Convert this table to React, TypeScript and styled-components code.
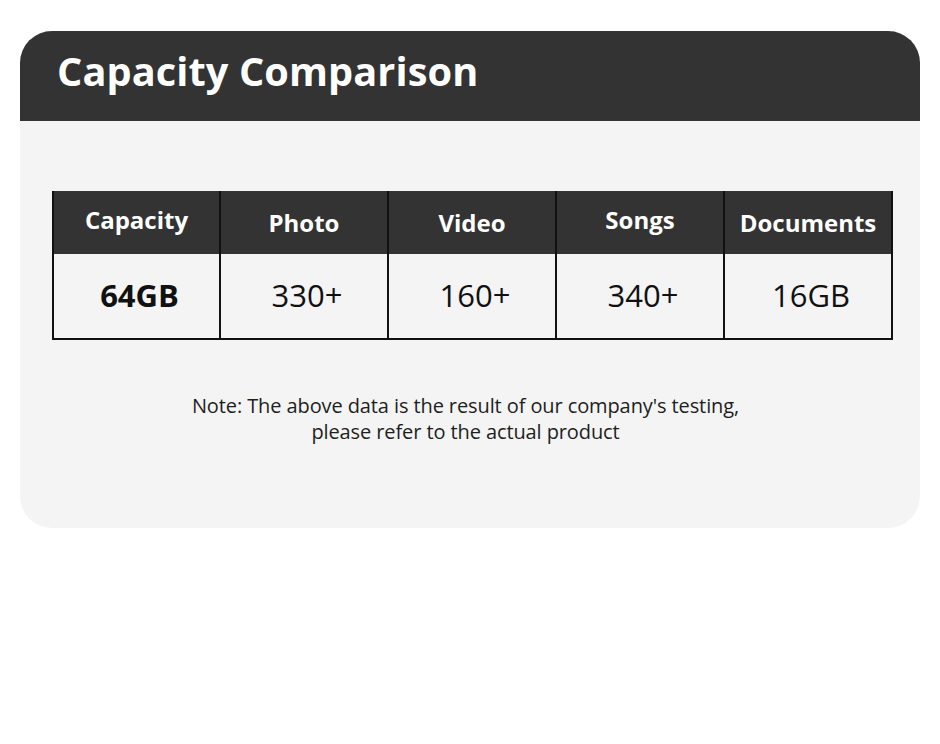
import React from "react";
import styled, { createGlobalStyle } from "styled-components";

const GlobalStyle = createGlobalStyle`
  html, body {
    margin: 0;
    padding: 0;
    background: #ffffff;
  }
  body {
    font-family: "Open Sans", "Liberation Sans", sans-serif;
  }
`;

const Page = styled.div`
  width: 940px;
  height: 744px;
  padding: 31px 20px 0;
  box-sizing: border-box;
`;

const Card = styled.section`
  width: 900px;
  height: 497px;
  background: #f4f4f4;
  border-radius: 32px;
  overflow: hidden;
  display: flex;
  flex-direction: column;
`;

const Header = styled.header`
  height: 90px;
  background: #333333;
  display: flex;
  align-items: center;
  padding-left: 37px;
  box-sizing: border-box;
`;

const Title = styled.h1`
  margin: 0;
  color: #ffffff;
  font-size: 39.7px;
  font-weight: 700;
  letter-spacing: 0.1px;
  line-height: 1;
  padding-bottom: 8px;
`;

const Body = styled.div`
  padding: 70px 0 0 32px;
  display: flex;
  flex-direction: column;
  align-items: flex-start;
`;

const Table = styled.div`
  display: grid;
  grid-template-columns: 167px repeat(4, 168px);
  border-left: 2px solid #111111;
  border-bottom: 2px solid #111111;
`;

const HeadCell = styled.div<{ $raised?: boolean }>`
  height: 63px;
  background: #333333;
  color: #ffffff;
  font-size: 24px;
  font-weight: 700;
  display: flex;
  align-items: center;
  justify-content: center;
  border-right: 2px solid #111111;
  padding-bottom: ${(p) => (p.$raised ? "6px" : "0")};
  box-sizing: border-box;
`;

const BodyCell = styled.div<{ $bold?: boolean }>`
  height: 84px;
  color: #111111;
  font-size: 31px;
  font-weight: ${(p) => (p.$bold ? 700 : 400)};
  display: flex;
  align-items: center;
  justify-content: center;
  border-right: 2px solid #111111;
  box-sizing: border-box;
  padding: 0 0 2px 6px;
`;

const Note = styled.p`
  align-self: stretch;
  margin: 53px 0 0;
  width: 841px;
  text-align: center;
  color: #1e1e1e;
  font-size: 20px;
  line-height: 26px;
  padding-right: 14px;
  box-sizing: border-box;
  letter-spacing: -0.1px;
`;

const headers = [
  { label: "Capacity", raised: true },
  { label: "Photo" },
  { label: "Video" },
  { label: "Songs", raised: true },
  { label: "Documents" },
];

const values = ["64GB", "330+", "160+", "340+", "16GB"];

export default function App() {
  return (
    <>
      <GlobalStyle />
      <Page>
        <Card>
          <Header>
            <Title>Capacity Comparison</Title>
          </Header>
          <Body>
            <Table>
              {headers.map((h) => (
                <HeadCell key={h.label} $raised={h.raised}>
                  {h.label}
                </HeadCell>
              ))}
              {values.map((v, i) => (
                <BodyCell key={v} $bold={i === 0}>
                  {v}
                </BodyCell>
              ))}
            </Table>
            <Note>
              Note: The above data is the result of our company's testing,
              <br />
              please refer to the actual product
            </Note>
          </Body>
        </Card>
      </Page>
    </>
  );
}
